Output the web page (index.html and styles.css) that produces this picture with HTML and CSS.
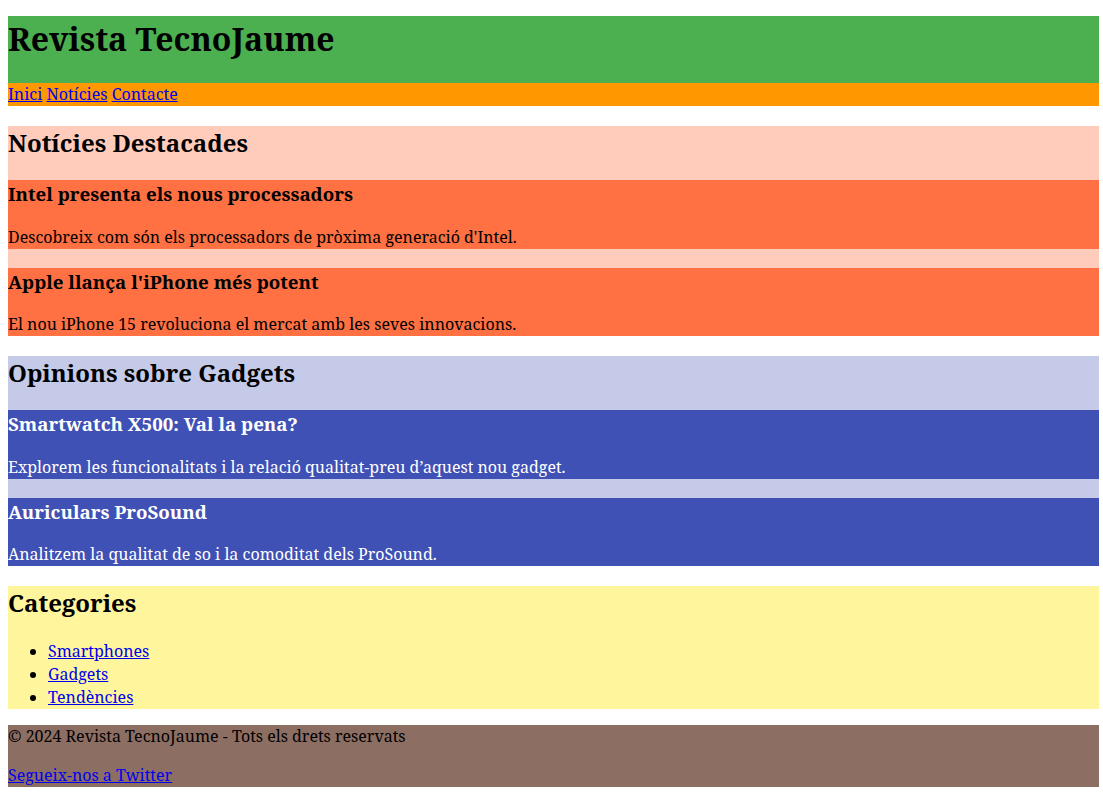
FILE: index.html
```html
<!DOCTYPE html>
<html lang="ca">
<head>
<meta charset="utf-8">
<title>Revista TecnoJaume</title>
<link rel="stylesheet" href="styles.css">
</head>
<body class="page">
<header class="site-header">
  <h1 class="site-title">Revista TecnoJaume</h1>
</header>
<nav class="site-nav">
  <a href="#">Inici</a>
  <a href="#">Notícies</a>
  <a href="#">Contacte</a>
</nav>
<section class="block block-news">
  <h2 class="block-title">Notícies Destacades</h2>
  <article class="card card-news">
    <h3 class="card-title">Intel presenta els nous processadors</h3>
    <p>Descobreix com són els processadors de pròxima generació d'Intel.</p>
  </article>
  <article class="card card-news">
    <h3 class="card-title">Apple llança l'iPhone més potent</h3>
    <p>El nou iPhone 15 revoluciona el mercat amb les seves innovacions.</p>
  </article>
</section>
<section class="block block-opinions">
  <h2 class="block-title">Opinions sobre Gadgets</h2>
  <article class="card card-opinion">
    <h3 class="card-title">Smartwatch X500: Val la pena?</h3>
    <p>Explorem les funcionalitats i la relació qualitat-preu d’aquest nou gadget.</p>
  </article>
  <article class="card card-opinion">
    <h3 class="card-title">Auriculars ProSound</h3>
    <p>Analitzem la qualitat de so i la comoditat dels ProSound.</p>
  </article>
</section>
<section class="block block-categories">
  <h2 class="block-title">Categories</h2>
  <ul>
    <li><a href="#">Smartphones</a></li>
    <li><a href="#">Gadgets</a></li>
    <li><a href="#">Tendències</a></li>
  </ul>
</section>
<footer class="site-footer">
  <p>© 2024 Revista TecnoJaume - Tots els drets reservats</p>
  <p><a href="#">Segueix-nos a Twitter</a></p>
</footer>
</body>
</html>
```
FILE: styles.css
```css
.page {
  margin: 8px 4px 8px 8px;
  font-family: "Noto Serif", serif;
  line-height: 23px;
}
.site-header {
  background: #4CAF50;
  margin-top: 8px;
  display: flow-root;
}
.site-title {
  margin: 0 0 0.67em;
  line-height: 46px;
}
.block-title {
  line-height: 34px;
}
.card-title {
  line-height: 27px;
}
.site-nav {
  background: #FF9800;
}
.block-news { background: #FFCCBC; }
.card-news { background: #FF7043; }
.block-opinions { background: #C5CAE9; }
.card-opinion { background: #3F51B5; color: #fff; }
.block-categories { background: #FFF59D; }
.site-footer { background: #8D6E63; }
```
